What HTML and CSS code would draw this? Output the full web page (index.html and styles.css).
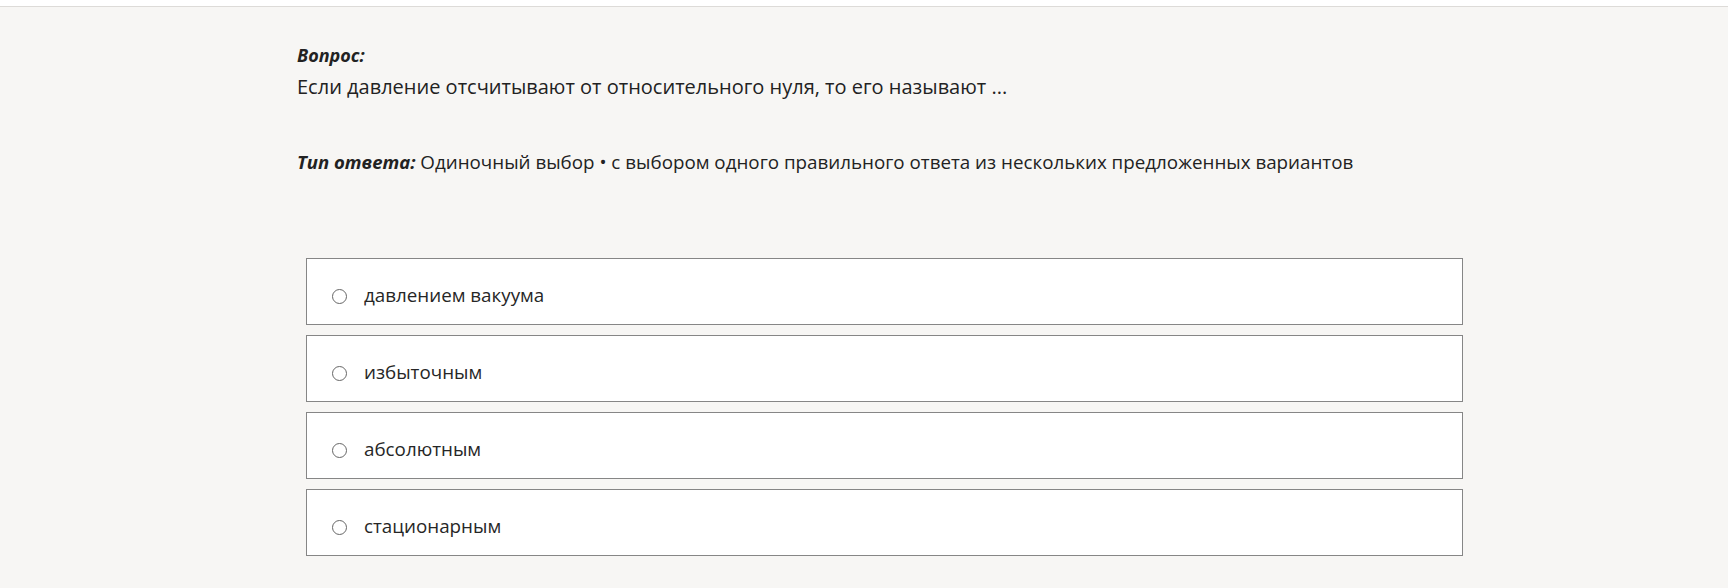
FILE: index.html
```html
<!DOCTYPE html>
<html lang="ru">
<head>
<meta charset="utf-8">
<title>Вопрос</title>
<link rel="stylesheet" href="styles.css">
</head>
<body>
<div class="topbar"></div>
<main class="quiz">
  <section class="question">
    <div class="label">Вопрос:</div>
    <div class="question-text">Если давление отсчитывают от относительного нуля, то его называют ...</div>
  </section>
  <p class="answer-type"><span class="label">Тип ответа:</span> Одиночный выбор • с выбором одного правильного ответа из нескольких предложенных вариантов</p>
  <ul class="options">
    <li class="option"><span class="radio"></span><span class="option-text">давлением вакуума</span></li>
    <li class="option"><span class="radio"></span><span class="option-text">избыточным</span></li>
    <li class="option"><span class="radio"></span><span class="option-text">абсолютным</span></li>
    <li class="option"><span class="radio"></span><span class="option-text">стационарным</span></li>
  </ul>
</main>
</body>
</html>
```
FILE: styles.css
```css
html, body {
  margin: 0;
  padding: 0;
}

body {
  background: #ffffff;
  font-family: "Open Sans", "Noto Sans", sans-serif;
  color: #222222;
  height: 588px;
  overflow: hidden;
}

.topbar {
  height: 6px;
  background: #ffffff;
}

.quiz {
  box-sizing: border-box;
  border-top: 1px solid #dddbd8;
  background: #f7f6f4;
  padding: 33px 265px 0 297px;
  height: 582px;
}

.label {
  font-weight: 700;
  font-style: italic;
}

.question .label {
  font-size: 18px;
  line-height: 30px;
}

.question-text {
  font-size: 20px;
  line-height: 34px;
}

.answer-type {
  margin: 43px 0 0;
  font-size: 18.8px;
  line-height: 30px;
}

.answer-type .label {
  font-size: 18.5px;
}

.options {
  list-style: none;
  margin: 81px 0 0;
  padding: 0 0 0 9px;
  display: flex;
  flex-direction: column;
  gap: 10px;
}

.option {
  display: flex;
  align-items: center;
  height: 67px;
  box-sizing: border-box;
  padding: 6px 0 0 25px;
  background: #ffffff;
  border: 1px solid #868686;
  font-size: 18.8px;
  line-height: 30px;
  color: #262626;
}

.radio {
  width: 15px;
  height: 15px;
  box-sizing: border-box;
  border: 1px solid #666666;
  border-radius: 50%;
  background: #ffffff;
  flex: none;
  margin-right: 17px;
  margin-top: 3px;
}
```
